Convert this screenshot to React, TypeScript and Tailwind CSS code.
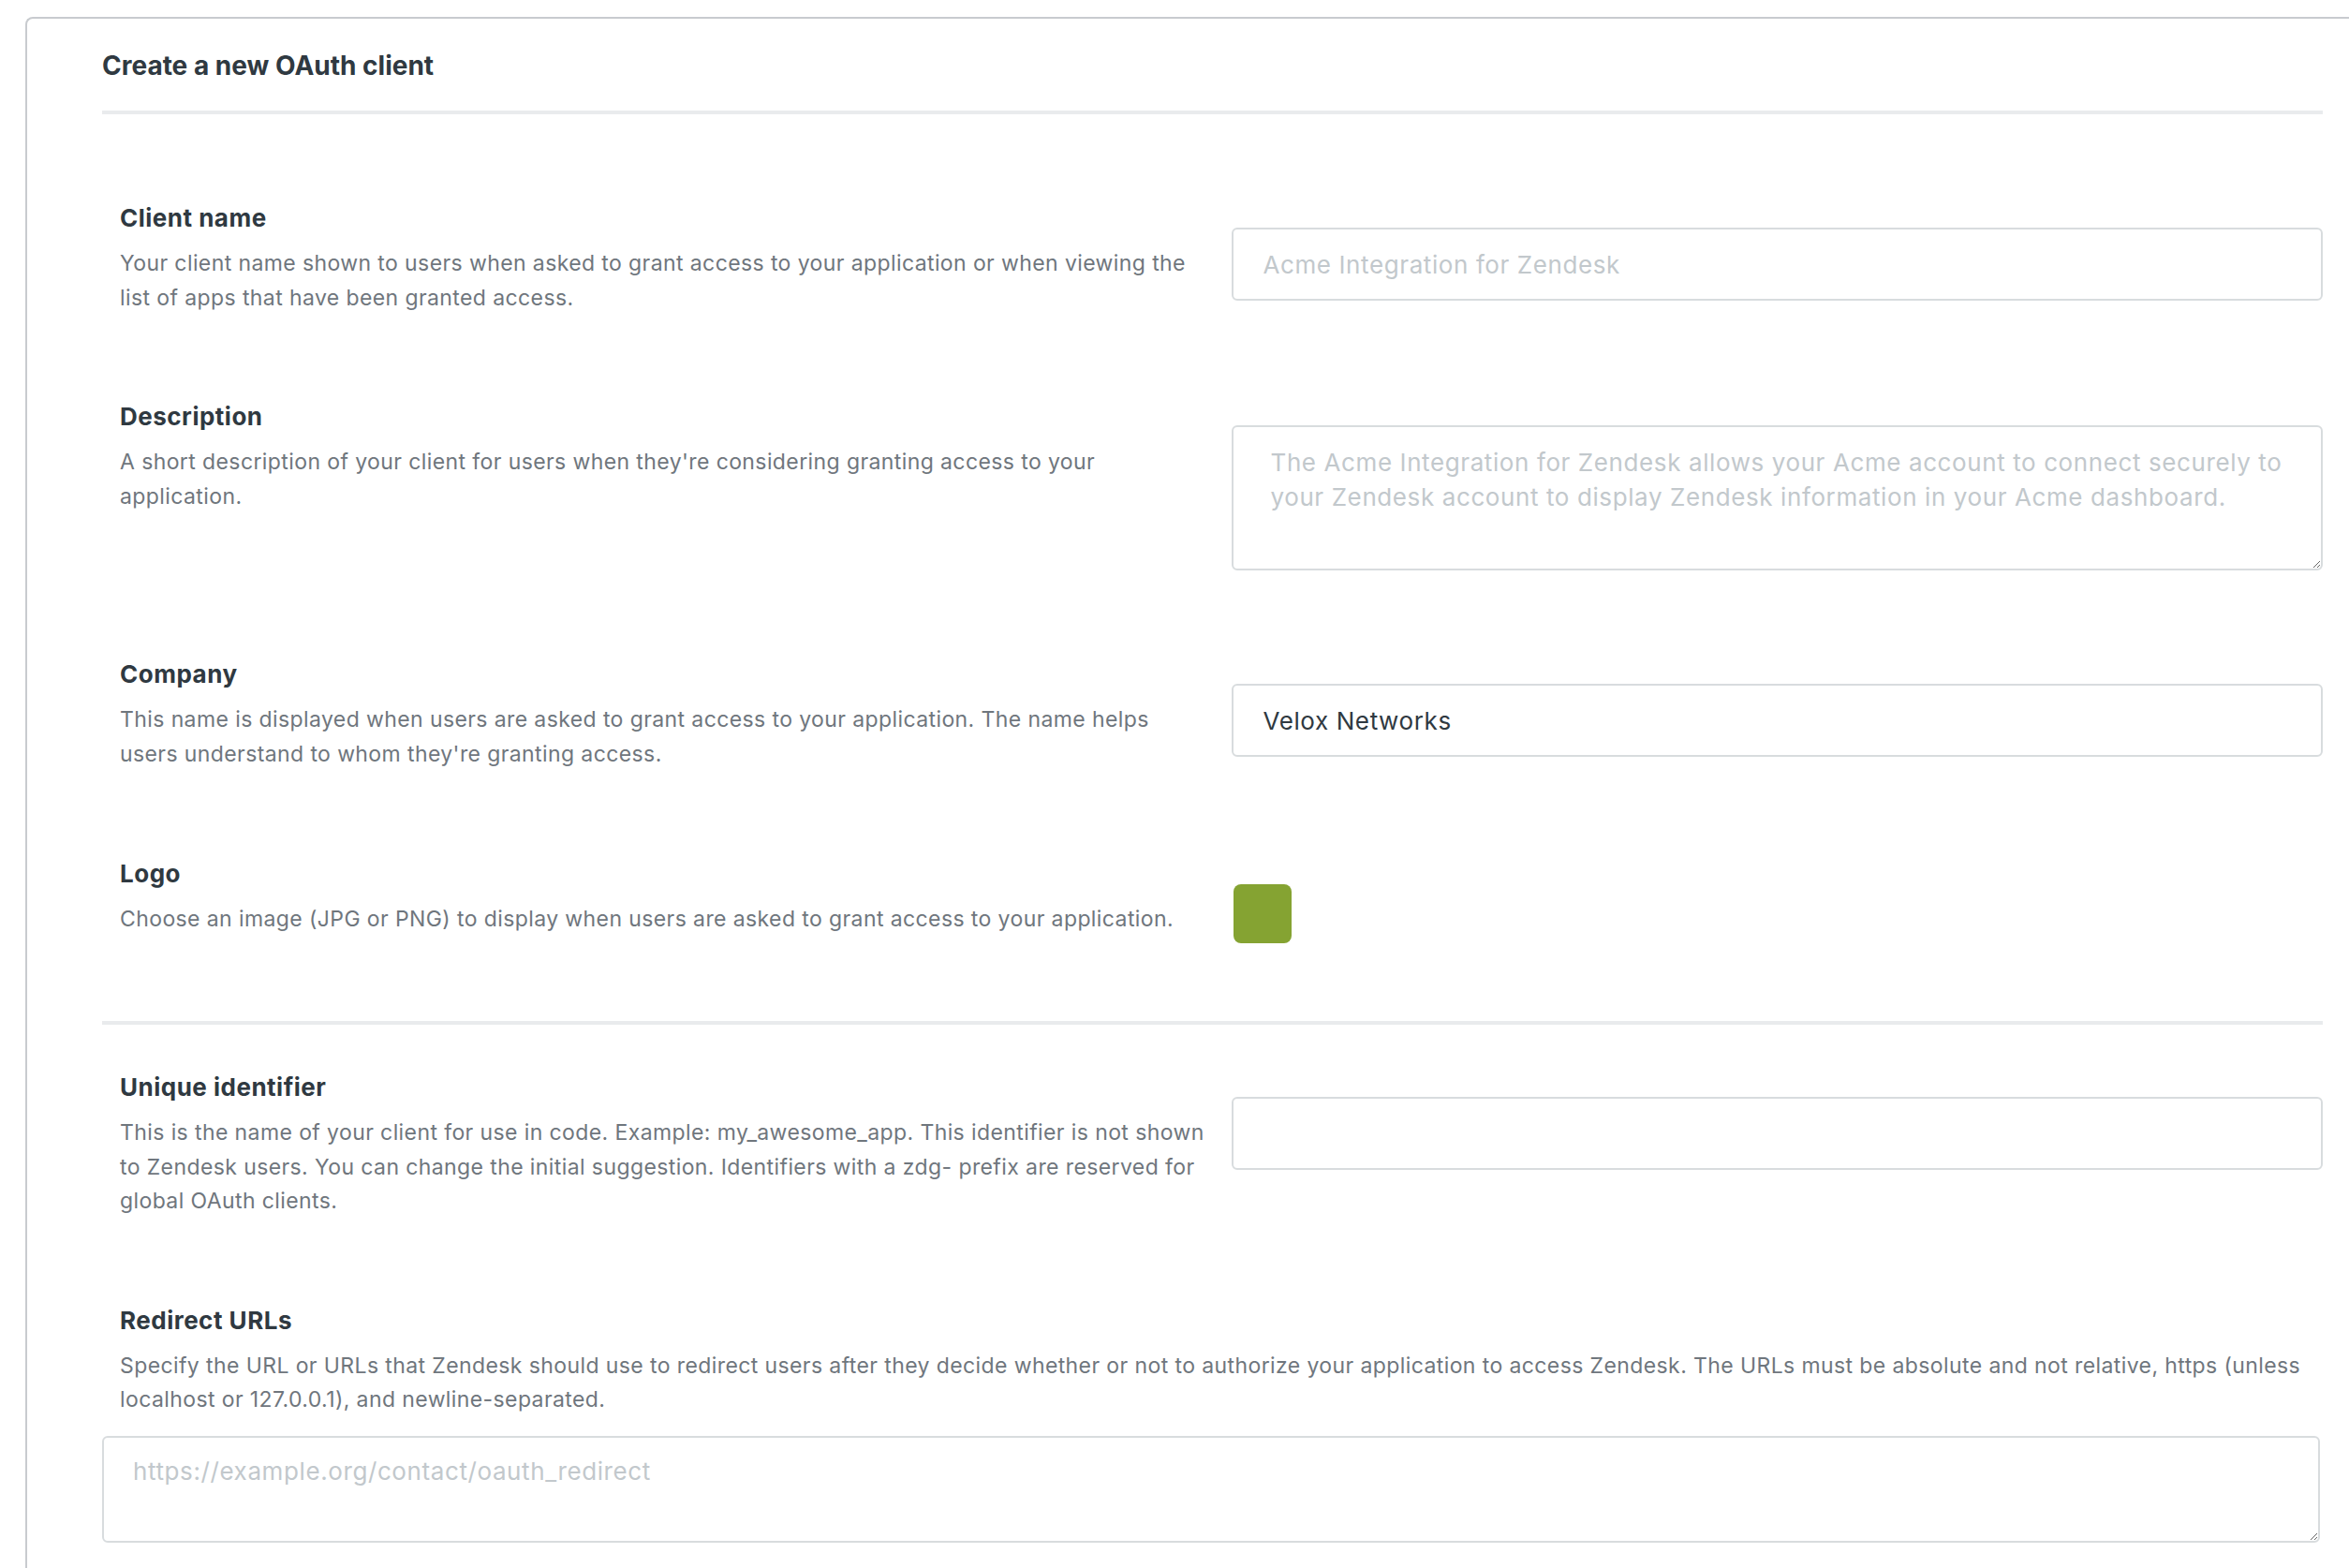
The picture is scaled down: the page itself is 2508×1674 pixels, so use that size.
import type { ReactNode } from "react";

function Field({ label, hint, className, children }: { label: string; hint: string; className: string; children: ReactNode }) {
  return (
    <div className={`grid grid-cols-2 ${className}`}>
      <div className="pl-[19px]">
        <div className="text-[26px] leading-[36px] font-bold tracking-[0.5px] text-[#2f3941]">{label}</div>
        <p className="mt-[12px] text-[23px] leading-[36.5px] tracking-[0.4px] text-[#6f767d]">{hint}</p>
      </div>
      <div className="pl-[20px] pt-[28px]">{children}</div>
    </div>
  );
}

const inputCls =
  "block w-full h-[78px] rounded-[6px] border-2 border-[#d8dcde] bg-white px-[32px] text-[26px] tracking-[0.6px] text-[#2f3941] placeholder:text-[#c2c8cc] outline-none";

export default function App() {
  return (
    <div className="h-[1674px] w-full overflow-hidden bg-white font-['Inter','Noto_Sans',sans-serif]">
      <div className="ml-[27px] mt-[18px] h-[1720px] w-[2533px] rounded-tl-[8px] border-l-2 border-t-2 border-[#c8cbcf] pl-[80px] pt-[32px]">
        <div className="w-[2371px]">
          <h1 className="text-[28px] leading-[36px] font-bold text-[#2f3941]">Create a new OAuth client</h1>
          <div className="mt-[30px] h-[4px] bg-[#e9ebed]" />

          <Field
            className="mt-[93px]"
            label="Client name"
            hint="Your client name shown to users when asked to grant access to your application or when viewing the list of apps that have been granted access."
          >
            <input className={inputCls} placeholder="Acme Integration for Zendesk" />
          </Field>

          <Field
            className="mt-[91px]"
            label="Description"
            hint="A short description of your client for users when they're considering granting access to your application."
          >
            <textarea
              className="-mt-px block h-[155px] w-full rounded-[6px] border-2 border-[#d8dcde] bg-white pl-[40px] pr-[24px] pt-[19px] text-[26px] leading-[37px] tracking-[0.6px] text-[#2f3941] placeholder:text-[#c2c8cc] outline-none"
              placeholder="The Acme Integration for Zendesk allows your Acme account to connect securely to your Zendesk account to display Zendesk information in your Acme dashboard."
            />
          </Field>

          <Field
            className="mt-[93px]"
            label="Company"
            hint="This name is displayed when users are asked to grant access to your application. The name helps users understand to whom they're granting access."
          >
            <input className={inputCls} defaultValue="Velox Networks" />
          </Field>

          <Field
            className="mt-[92px]"
            label="Logo"
            hint="Choose an image (JPG or PNG) to display when users are asked to grant access to your application."
          >
            <div className="ml-[2px] mt-[1px] h-[63px] w-[62px] rounded-[8px] bg-[#85a332]" />
          </Field>

          <div className="mt-[83px] h-[4px] bg-[#e9ebed]" />

          <Field
            className="mt-[49px]"
            label="Unique identifier"
            hint="This is the name of your client for use in code. Example: my_awesome_app. This identifier is not shown to Zendesk users. You can change the initial suggestion. Identifiers with a zdg- prefix are reserved for global OAuth clients."
          >
            <input className={inputCls} />
          </Field>

          <div className="mt-[91px]">
            <div className="pl-[19px]">
              <div className="text-[26px] leading-[36px] font-bold tracking-[0.5px] text-[#2f3941]">Redirect URLs</div>
              <p className="mt-[12px] text-[23px] leading-[36.5px] tracking-[0.4px] text-[#6f767d]">
                Specify the URL or URLs that Zendesk should use to redirect users after they decide whether or not to authorize your application to access Zendesk. The URLs must be absolute and not relative, https (unless localhost or 127.0.0.1), and newline-separated.
              </p>
            </div>
            <textarea
              className="mt-[20px] block h-[114px] w-[2368px] rounded-[6px] border-2 border-[#d8dcde] bg-white pl-[31px] pr-[24px] pt-[17px] text-[26px] leading-[37px] tracking-[0.6px] text-[#2f3941] placeholder:text-[#c2c8cc] outline-none"
              placeholder="https://example.org/contact/oauth_redirect"
            />
          </div>
        </div>
      </div>
    </div>
  );
}
